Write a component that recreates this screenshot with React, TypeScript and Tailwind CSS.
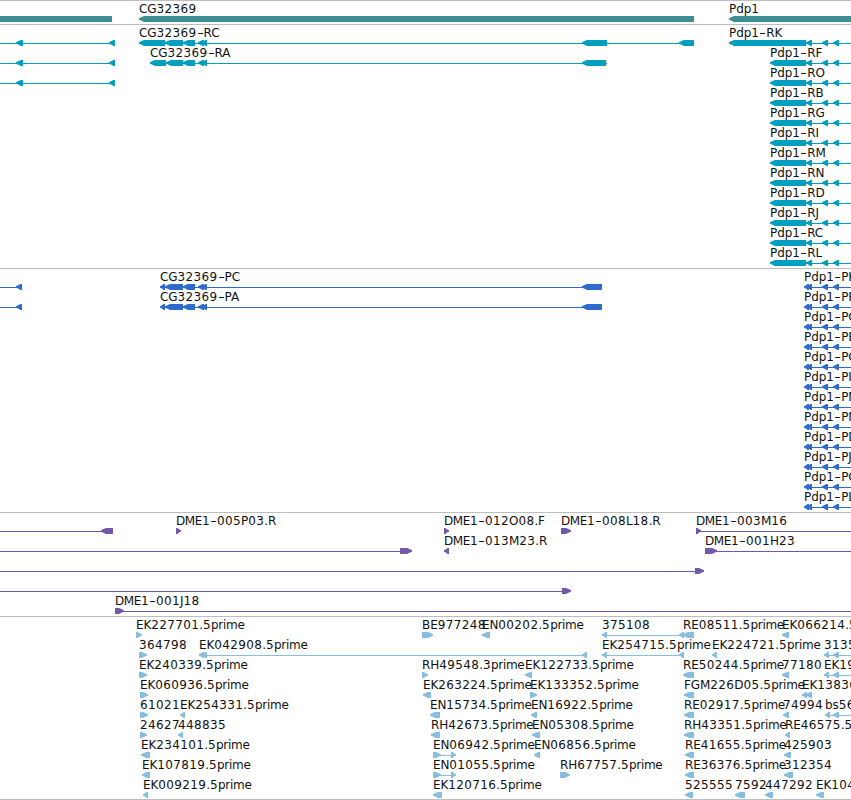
import React from "react";

// [start, end, direction]
type Exon = [number, number, "l" | "r"];

type Feature = {
  label?: string;
  at?: number;
  line?: [number, number];
  exons: Exon[];
};

type TrackProps = {
  name: string;
  color: string;
  lanes: Feature[][];
  last?: boolean;
};

const VIEW_WIDTH = 851;

const GENES: Feature[][] = [
  [
    { exons: [], line: [0, 112] },
    { label: "CG32369", at: 139, exons: [[139, 694, "l"]] },
    { label: "Pdp1", at: 729, exons: [[729, 860, "l"]] },
  ],
];

const ISOFORMS = ["K", "F", "O", "B", "G", "I", "M", "N", "D", "J", "C", "L"];

const upstream = (): Feature => ({
  line: [0, 115],
  exons: [
    [16, 23, "l"],
    [109, 115, "l"],
  ],
});

const CG_SHARED: Exon[] = [
  [183, 195, "l"],
  [198, 204, "l"],
  [202, 207, "l"],
];

const PDP_SHARED: Exon[] = [
  [822, 828, "l"],
  [833, 839, "l"],
];

const TRANSCRIPTS: Feature[][] = ISOFORMS.map((letter, i) => {
  const start = i === 0 ? 729 : 770;
  return [
    {
      label: `Pdp1-R${letter}`,
      at: start,
      line: [start + 5, VIEW_WIDTH],
      exons: [[start, 806, "l"], [806, 812, "l"], ...PDP_SHARED],
    },
  ];
});

TRANSCRIPTS[0].unshift(upstream(), {
  label: "CG32369-RC",
  at: 139,
  line: [144, 690],
  exons: [
    [139, 165, "l"],
    [165, 183, "l"],
    ...CG_SHARED,
    [582, 607, "l"],
    [679, 694, "l"],
  ],
});
TRANSCRIPTS[1].unshift(upstream(), {
  label: "CG32369-RA",
  at: 150,
  line: [155, 607],
  exons: [[150, 166, "l"], [166, 183, "l"], ...CG_SHARED, [582, 606, "l"]],
});
TRANSCRIPTS[2].unshift(upstream());

const PROTEINS: Feature[][] = ISOFORMS.map((letter) => [
  {
    label: `Pdp1-P${letter}`,
    at: 804,
    line: [808, VIEW_WIDTH],
    exons: [[804, 809, "l"], [807, 812, "l"], ...PDP_SHARED],
  },
]);

["PC", "PA"].forEach((suffix, i) => {
  PROTEINS[i].unshift(
    { line: [0, 22], exons: [[16, 22, "l"]] },
    {
      label: `CG32369-${suffix}`,
      at: 160,
      line: [163, 590],
      exons: [[160, 165, "l"], [165, 183, "l"], ...CG_SHARED, [582, 602, "l"]],
    }
  );
});

const BAC_ENDS: Feature[][] = [
  [
    { line: [0, 110], exons: [[101, 113, "l"]] },
    { label: "DME1-005P03.R", at: 176, exons: [[176, 181, "r"]] },
    { label: "DME1-012O08.F", at: 444, exons: [[444, 449, "r"]] },
    { label: "DME1-008L18.R", at: 561, exons: [[561, 571, "r"]] },
    { label: "DME1-003M16", at: 696, line: [698, 851], exons: [[696, 701, "r"]] },
  ],
  [
    { line: [0, 408], exons: [[400, 412, "r"]] },
    { label: "DME1-013M23.R", at: 444, exons: [[444, 449, "l"]] },
    { label: "DME1-001H23", at: 705, line: [710, 851], exons: [[705, 717, "r"]] },
  ],
  [{ line: [0, 700], exons: [[695, 704, "r"]] }],
  [{ line: [0, 566], exons: [[562, 571, "r"]] }],
  [{ label: "DME1-001J18", at: 115, line: [120, 851], exons: [[115, 124, "r"]] }],
];

const est = (label: string, at: number, end: number, dir: "l" | "r" = "l"): Feature => ({
  label,
  at,
  exons: [[at, end, dir]],
});

const ESTS: Feature[][] = [
  [
    est("EK227701.5prime", 136, 142, "r"),
    est("BE977248", 422, 433, "r"),
    est("EN00202.5prime", 482, 490),
    {
      label: "375108",
      at: 602,
      line: [605, 686],
      exons: [
        [602, 607, "l"],
        [679, 684, "l"],
      ],
    },
    est("RE08511.5prime", 683, 694),
    est("EK066214.5", 782, 789),
  ],
  [
    est("364798", 139, 147, "r"),
    {
      label: "EK042908.5prime",
      at: 199,
      line: [203, 586],
      exons: [
        [199, 204, "l"],
        [202, 207, "l"],
        [582, 587, "l"],
      ],
    },
    {
      label: "EK254715.5prime",
      at: 602,
      line: [605, 684],
      exons: [
        [602, 607, "l"],
        [679, 684, "l"],
      ],
    },
    est("EK224721.5prime", 712, 717),
    {
      label: "3135",
      at: 824,
      line: [827, 851],
      exons: [
        [824, 829, "l"],
        [833, 839, "l"],
      ],
    },
  ],
  [
    est("EK240339.5prime", 139, 147, "r"),
    est("RH49548.3prime", 422, 428, "r"),
    est("EK122733.5prime", 525, 532),
    est("RE50244.5prime", 683, 694),
    est("77180", 782, 789),
    {
      label: "EK19",
      at: 824,
      line: [827, 851],
      exons: [
        [824, 829, "l"],
        [833, 839, "l"],
      ],
    },
  ],
  [
    est("EK060936.5prime", 140, 148, "r"),
    est("EK263224.5prime", 423, 431),
    est("EK133352.5prime", 530, 537, "r"),
    est("FGM226D05.5prime", 684, 694),
    {
      label: "EK13836",
      at: 802,
      exons: [
        [802, 807, "l"],
        [806, 812, "l"],
      ],
    },
  ],
  [
    est("61021", 140, 148, "r"),
    est("EK254331.5prime", 180, 185),
    est("EN15734.5prime", 430, 440),
    est("EN16922.5prime", 531, 537),
    est("RE02917.5prime", 684, 694),
    est("74994", 783, 789),
    {
      label: "bs56",
      at: 825,
      line: [828, 851],
      exons: [
        [825, 830, "l"],
        [833, 839, "l"],
      ],
    },
  ],
  [
    est("24627", 140, 147, "r"),
    est("448835", 178, 183),
    est("RH42673.5prime", 431, 440),
    est("EN05308.5prime", 532, 540),
    est("RH43351.5prime", 684, 694),
    est("RE46575.5", 785, 790),
  ],
  [
    est("EK234101.5prime", 141, 150),
    {
      label: "EN06942.5prime",
      at: 433,
      line: [438, 454],
      exons: [
        [433, 441, "r"],
        [451, 456, "r"],
      ],
    },
    est("EN06856.5prime", 534, 540),
    est("RE41655.5prime", 685, 694),
    est("425903", 784, 791),
  ],
  [
    est("EK107819.5prime", 142, 150),
    {
      label: "EN01055.5prime",
      at: 433,
      line: [438, 454],
      exons: [
        [433, 441, "r"],
        [451, 456, "r"],
      ],
    },
    est("RH67757.5prime", 560, 570, "r"),
    est("RE36376.5prime", 685, 694),
    est("312354", 784, 793),
  ],
  [
    est("EK009219.5prime", 143, 148),
    est("EK120716.5prime", 433, 442),
    est("525555", 685, 693),
    est("7592", 735, 745),
    est("447292", 765, 773),
    est("EK104", 816, 824),
  ],
];

// Block with a pointed end, 6px tall
function exonPoints([start, end, dir]: Exon) {
  const head = Math.min(end - start - 1.5, 5);
  const [tip, neck, tail, step] =
    dir === "l" ? [start, start + head, end, 1] : [end, end - head, start, -1];
  return `${tip},2.3 ${tip + step * 2},1.2 ${neck},0 ${tail},0 ${tail},6 ${neck},6 ${tip + step * 2},4.6 ${tip},3.7`;
}

// Figures are set a little wider than letters, the hyphen fills a whole figure
function runClass(run: string) {
  if (run === "-") return "inline-block w-[7px] text-center scale-x-150";
  if (run === "prime") return "tracking-[-0.3px]";
  if (run === "DME") return "tracking-[-0.4px]";
  return /\d/.test(run) ? "tracking-[0.37px]" : "tracking-[-0.1px]";
}

function Label({ text, at }: { text: string; at?: number }) {
  const runs = text.match(/\d+|-|prime|\.|[^\d.-]+/g) ?? [];
  return (
    <span className="absolute top-[1px] text-[#111111] whitespace-nowrap" style={{ left: at }}>
      {runs.map((run, i) => (
        <span key={i} className={runClass(run)}>
          {run}
        </span>
      ))}
    </span>
  );
}

function Lane({ features, thick }: { features: Feature[]; thick: boolean }) {
  return (
    <div className="relative h-5">
      {features.map((f, i) => f.label && <Label key={i} text={f.label} at={f.at} />)}
      <svg
        className="absolute left-0 top-[15px]"
        width={VIEW_WIDTH}
        height={6}
        fill="currentColor"
        aria-hidden="true"
      >
        {features.map((f, i) => (
          <g key={i}>
            {f.line && (
              <rect
                x={f.line[0]}
                y={thick ? 0 : 3}
                width={f.line[1] - f.line[0]}
                height={thick ? 6 : 1}
              />
            )}
            {f.exons.map((exon, j) => (
              <polygon key={j} points={exonPoints(exon)} />
            ))}
          </g>
        ))}
      </svg>
    </div>
  );
}

function Track({ name, color, lanes, last = false }: TrackProps) {
  return (
    <section
      aria-label={name}
      className={`border-t border-[#bebebe] ${color} ${
        last ? "border-b pb-[2px]" : "pb-[3px]"
      }`}
    >
      {lanes.map((features, i) => (
        <Lane key={i} features={features} thick={name === "Genes"} />
      ))}
    </section>
  );
}

export default function App() {
  return (
    <main className="w-[851px] h-[800px] overflow-hidden bg-white font-['DejaVu_Sans',sans-serif] text-[12px] leading-[15px]">
      <Track name="Genes" color="text-[#3d8f94]" lanes={GENES} />
      <Track name="Transcripts" color="text-[#009ebf]" lanes={TRANSCRIPTS} />
      <Track name="Proteins" color="text-[#2e6bcd]" lanes={PROTEINS} />
      <Track name="BAC ends" color="text-[#7357a8]" lanes={BAC_ENDS} />
      <Track name="ESTs" color="text-[#87bddf]" lanes={ESTS} last />
    </main>
  );
}
